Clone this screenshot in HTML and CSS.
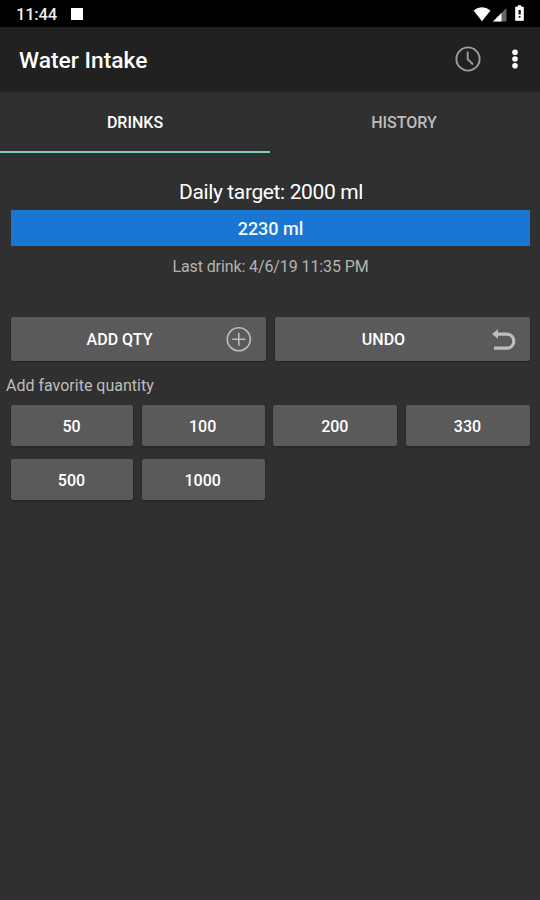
FILE: index.html
```html
<!DOCTYPE html>
<html lang="en">
<head>
<meta charset="utf-8">
<title>Water Intake</title>
<link rel="stylesheet" href="styles.css">
</head>
<body>
<div class="screen">
  <div class="status">
    <span class="time">11:44</span>
    <span class="square"></span>
    <svg class="status-icons" width="54" height="20" viewBox="0 0 54 20">
      <path d="M0.500 6.400Q9 0 17.500 6.400L9 17.200Z" fill="#fff"/>
      <path d="M33.500 4V17.500H20Z" fill="#666"/>
      <path d="M28.500 9V17.500H20Z" fill="#fff"/>
      <path d="M45 1.500h3v1.500h2.500V16.500h-8V3h2.500z" fill="#fff" stroke="#fff" stroke-width=".6"/>
      <path d="M45.500 6h2.300v4.500H45.500zM45.700 12h1.800v1.800h-1.800z" fill="#111"/>
    </svg>
  </div>
  <header class="appbar">
    <h1>Water Intake</h1>
    <svg class="clock" width="26" height="26" viewBox="0 0 26 26" fill="none" stroke="#9c9c9c" stroke-width="1.900">
      <circle cx="13" cy="13" r="11.600"/>
      <path d="M12.700 5.500V13.200L18 18.500"/>
    </svg>
    <svg class="more" width="8" height="22" viewBox="0 0 8 22" fill="#fff">
      <circle cx="4" cy="4.200" r="2.800"/><circle cx="4" cy="11" r="2.800"/><circle cx="4" cy="17.800" r="2.800"/>
    </svg>
  </header>
  <nav class="tabs">
    <div class="tab active">DRINKS</div>
    <div class="tab history">HISTORY</div>
  </nav>
  <main>
    <p class="target"><span>Daily target: 2000 ml</span></p>
    <div class="progress"><span>2230 ml</span></div>
    <p class="last"><span>Last drink: 4/6/19 11:35 PM</span></p>
    <div class="actions">
      <div class="button action"><span>ADD QTY</span>
        <svg width="26" height="26" viewBox="0 0 26 26" fill="none" stroke="#bcbcbc" stroke-width="1.600">
          <circle cx="12.800" cy="13.300" r="11.500"/><path d="M12.800 6.800V19.800M6.300 13.300H19.300"/>
        </svg>
      </div>
      <div class="button action"><span>UNDO</span>
        <svg width="26" height="26" viewBox="0 0 26 26" fill="none">
          <path d="M6 8.200H16.500C26.300 8.200 26.300 22.200 16.500 22.200H4" stroke="#bebebe" stroke-width="3.200"/>
          <path d="M2 8L8 3.200V12.800Z" fill="#bebebe"/>
        </svg>
      </div>
    </div>
    <p class="label"><span>Add favorite quantity</span></p>
    <div class="grid">
      <div class="button"><span>50</span></div>
      <div class="button"><span>100</span></div>
      <div class="button"><span>200</span></div>
      <div class="button"><span>330</span></div>
      <div class="button"><span>500</span></div>
      <div class="button"><span>1000</span></div>
    </div>
  </main>
</div>
</body>
</html>
```
FILE: styles.css
```css
* { box-sizing: border-box; margin: 0; padding: 0; }
body { background: #303030; color: #fff; font-family: Roboto, "Liberation Sans", sans-serif; }
svg { display: block; flex: none; }
.screen { width: 540px; height: 900px; display: flex; flex-direction: column; border-bottom: 1px solid #392c35; }
.status { height: 27px; background: #000; display: flex; align-items: center; padding: 0 13px 0 16px; }
.time { font-size: 16.5px; font-weight: 500; line-height: 27px; width: 55px; padding-top: 1px; color: #eee; letter-spacing: -.2px; }
.square { width: 12px; height: 12px; background: #fff; margin-top: 1px; }
.status-icons { margin-left: auto; }
.appbar { height: 64px; background: #212121; display: flex; align-items: center; padding: 0 21px 0 19px; box-shadow: 0 1px 2px rgba(0,0,0,.3); }
.appbar h1 { font-size: 22.8px; font-weight: 500; line-height: 30px; padding-top: 4px; flex: 1; }
.more { margin-left: 30px; }
.tabs { display: flex; height: 63px; }
.tab { width: 270px; text-align: center; font-size: 16px; font-weight: 500; line-height: 63px; color: #bdbdbd; }
.tab.active { height: 62px; color: #fff; border-bottom: 2px solid #80cbc4; }
.tab.history { padding-right: 2px; }
main { padding: 25px 10px 0 11px; }
main p { display: flex; justify-content: center; white-space: nowrap; }
.target { font-size: 21px; line-height: 26px; height: 31px; letter-spacing: -.38px; padding-left: 1px; }
.progress { height: 36px; background: #1976d2; text-align: center; font-size: 18px; font-weight: 500; line-height: 37px; color: #f4f8fc; }
.last { font-size: 16px; line-height: 20px; padding-top: 11px; height: 71px; color: #b4b4b4; letter-spacing: -.1px; }
.button { background: #5a5a5b; border-radius: 2px; text-align: center; font-size: 16px; font-weight: 500; box-shadow: 0 1px 2px rgba(0,0,0,.3); }
.actions { display: grid; grid-template-columns: 1fr 1fr; gap: 9px; }
.action { height: 44px; display: flex; align-items: center; padding-right: 14px; }
.action span { flex: 1; padding-left: 2px; }
main .label { justify-content: flex-start; margin-left: -5px; font-size: 16px; line-height: 20px; padding-top: 15px; height: 44px; color: #bdbdbd; }
.grid { display: grid; grid-template-columns: 122px 123px 124px 124px; column-gap: 8.66px; row-gap: 13px; }
.grid .button { height: 41px; line-height: 43px; padding-right: 1px; }
```
